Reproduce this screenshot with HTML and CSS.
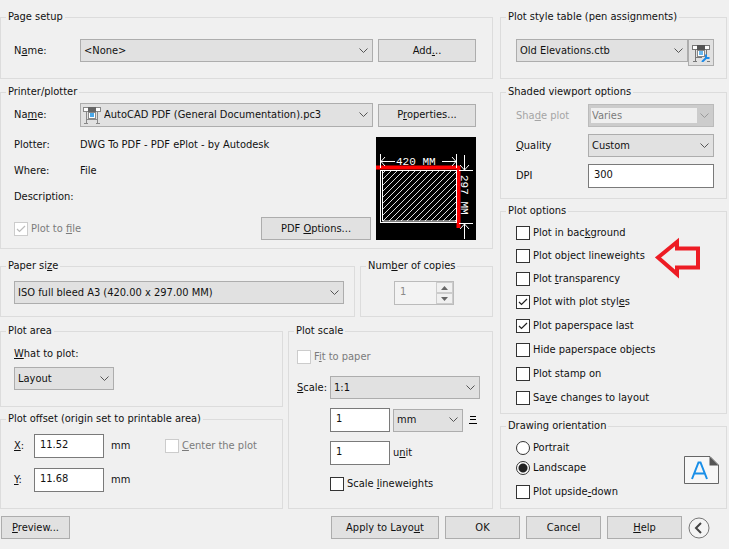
FILE: index.html
```html
<!DOCTYPE html>
<html lang="en">

<head>
    <meta charset="UTF-8" />
    <meta name="viewport" content="width=device-width, initial-scale=1.0" />
    <title>Plot</title>
    <link rel="stylesheet" href="styles.css">
</head>

<body>
    <form class="dialog">
        <div class="column main-column">
            <fieldset class="page-setup">
                <legend>Page setup</legend>
                <div class="setup-row">
                    <label for="setupName">N<u>a</u>me:</label>
                    <select id="setupName">
                        <option>&lt;None&gt;</option>
                    </select>
                    <button type="button">Add<u>.</u>..</button>
                </div>
            </fieldset>

            <fieldset class="printer">
                <legend>Printer/plotter</legend>
                <div class="setup-row">
                    <label for="printerName">Na<u>m</u>e:</label>
                    <div class="icon-select">
                        <select id="printerName">
                            <option>AutoCAD PDF (General Documentation).pc3</option>
                        </select>
                        <svg class="plotter-icon" width="18" height="18" viewBox="0 0 18 18">
                            <path d="M3.500 6v11M14.500 6v11M1 17.500h4M13 17.500h4M4 13.500h10" fill="none" stroke="#888" />
                            <rect x="0.500" y="1.500" width="17" height="4" fill="#fff" stroke="#888" />
                            <rect x="5" y="1" width="8" height="5" fill="#666" />
                            <rect x="5.500" y="6.500" width="7" height="6" fill="#fff" stroke="#888" />
                            <rect x="7" y="7" width="4" height="4" fill="#4aa8ea" />
                        </svg>
                    </div>
                    <button type="button">P<u>r</u>operties...</button>
                </div>
                <div class="printer-body">
                    <div class="printer-info">
                        <dl>
                            <dt>Plotter:</dt>
                            <dd>DWG To PDF - PDF ePlot - by Autodesk</dd>
                            <dt>Where:</dt>
                            <dd>File</dd>
                            <dt>Description:</dt>
                            <dd></dd>
                        </dl>
                        <div class="file-row">
                            <label class="check disabled"><input type="checkbox" checked disabled /><span>Plot to <u>f</u>ile</span></label>
                            <button type="button">PDF <u>O</u>ptions...</button>
                        </div>
                    </div>
                    <svg class="preview" width="100" height="103" viewBox="0 0 100 103">
                        <defs>
                            <clipPath id="paper">
                                <rect x="7" y="34" width="73" height="50" />
                            </clipPath>
                        </defs>
                        <rect width="100" height="103" fill="#000" />
                        <path clip-path="url(#paper)" fill="none" stroke="#ddd" d="M3 40l10-10M3 46l16-16M3 52l22-22M3 58l28-28M3 64l34-34M3 70l40-40M3 76l46-46M3 82l52-52M3 88l58-58M9 88l58-58M15 88l58-58M21 88l58-58M27 88l58-58M33 88l58-58M39 88l58-58M45 88l58-58M51 88l58-58M57 88l58-58M63 88l58-58M69 88l58-58M75 88l58-58" />
                        <path d="M0 30.500h83.500M82.500 29v62" fill="none" stroke="#f00" stroke-width="4" />
                        <rect x="4.500" y="33.500" width="76" height="52" fill="none" stroke="#fff" />
                        <path d="M6.500 34v50h74" fill="none" stroke="#fff" />
                        <g fill="none" stroke="#fff">
                            <path d="M4.500 17v14M80.500 17v14M5 24.500h14M66 24.500h14M9 20l-4 4.500l4 4.500M76 20l4 4.500l-4 4.500" />
                            <path d="M83 33.500h14M83 86.500h14M88.500 18v15M88.500 87v15M84 28l4.500 5l4.500-5M84 92l4.500-5l4.500 5" />
                        </g>
                        <text x="20" y="28" class="dimension">420 MM</text>
                        <text x="38" y="-85" transform="rotate(90)" class="dimension">297 MM</text>
                    </svg>
                </div>
            </fieldset>

            <div class="paper-row">
                <fieldset>
                    <legend>Paper si<u>z</u>e</legend>
                    <select class="paper-select" aria-label="Paper size">
                        <option>ISO full bleed A3 (420.00 x 297.00 MM)</option>
                    </select>
                </fieldset>
                <fieldset>
                    <legend>Num<u>b</u>er of copies</legend>
                    <div class="spinner">
                        <input type="text" value="1" aria-label="Number of copies" disabled />
                        <button type="button" aria-label="More copies" disabled><svg width="7" height="4" viewBox="0 0 7 4"><path d="M0 4L3.500 0L7 4z" /></svg></button>
                        <button type="button" aria-label="Fewer copies" disabled><svg width="7" height="4" viewBox="0 0 7 4"><path d="M0 0L3.500 4L7 0z" /></svg></button>
                    </div>
                </fieldset>
            </div>

            <div class="plot-row">
                <div class="column">
                    <fieldset class="plot-area">
                        <legend>Plot area</legend>
                        <label for="whatToPlot"><u>W</u>hat to plot:</label>
                        <select id="whatToPlot">
                            <option>Layout</option>
                        </select>
                    </fieldset>
                    <fieldset class="plot-offset">
                        <legend>Plot offset (origin set to printable area)</legend>
                        <div class="offset-grid">
                            <label for="offsetX"><u>X</u>:</label>
                            <input type="text" id="offsetX" value="11.52" />
                            <span>mm</span>
                            <label class="check disabled"><input type="checkbox" disabled /><span><u>C</u>enter the plot</span></label>
                            <label for="offsetY"><u>Y</u>:</label>
                            <input type="text" id="offsetY" value="11.68" />
                            <span>mm</span>
                        </div>
                    </fieldset>
                </div>
                <fieldset class="plot-scale">
                    <legend>Plot scale</legend>
                    <label class="check disabled"><input type="checkbox" disabled /><span>F<u>i</u>t to paper</span></label>
                    <div class="scale-grid">
                        <label for="scale"><u>S</u>cale:</label>
                        <select id="scale" class="scale-select">
                            <option>1:1</option>
                        </select>
                        <input type="text" class="paper-units" value="1" aria-label="Paper units" />
                        <select aria-label="Unit">
                            <option>mm</option>
                        </select>
                        <svg class="equals" width="8" height="8" viewBox="0 0 8 8">
                            <path d="M1 0.500h6M1 3.500h6M0 7.500h8" fill="none" stroke="#000" />
                        </svg>
                        <input type="text" class="paper-units" id="drawingUnits" value="1" />
                        <label for="drawingUnits">u<u>n</u>it</label>
                        <label class="check scale-lineweights"><input type="checkbox" /><span>Scale <u>l</u>ineweights</span></label>
                    </div>
                </fieldset>
            </div>
        </div>

        <div class="column side-column">
            <fieldset class="style-table">
                <legend>Plot style table (pen assi<u>g</u>nments)</legend>
                <div class="style-row">
                    <select aria-label="Plot style table">
                        <option>Old Elevations.ctb</option>
                    </select>
                    <button type="button" class="edit-style" aria-label="Edit plot style">
                        <svg width="18" height="18" viewBox="0 0 18 18">
                            <path d="M3.500 6v11M14.500 6v6M1 17.500h4M15 17.500h3M4 13.500h6" fill="none" stroke="#777" />
                            <rect x="0.500" y="1.500" width="17" height="4" fill="#fff" stroke="#777" />
                            <rect x="5" y="1" width="8" height="5" fill="#555" />
                            <rect x="5.500" y="6.500" width="7" height="6" fill="#fff" stroke="#888" />
                            <rect x="7" y="7" width="4" height="4" fill="#6bb8ee" />
                            <path d="M10 18L15 13M14 10.500v3.500h3.500" fill="none" stroke="#1d8be8" stroke-width="2" />
                        </svg>
                    </button>
                </div>
            </fieldset>

            <fieldset class="shaded">
                <legend>Shaded viewport options</legend>
                <div class="shaded-grid">
                    <label for="shadePlot" class="muted">Sha<u>d</u>e plot</label>
                    <select id="shadePlot" disabled>
                        <option>Varies</option>
                    </select>
                    <label for="quality"><u>Q</u>uality</label>
                    <select id="quality">
                        <option>Custom</option>
                    </select>
                    <label for="dpi">DPI</label>
                    <input type="text" id="dpi" value="300" />
                </div>
            </fieldset>

            <fieldset class="plot-options">
                <legend>Plot options</legend>
                <label class="check"><input type="checkbox" /><span>Plot in bac<u>k</u>ground</span></label>
                <label class="check"><input type="checkbox" /><span>Plot object lineweights</span></label>
                <label class="check"><input type="checkbox" /><span>Plot <u>t</u>ransparency</span></label>
                <label class="check"><input type="checkbox" checked /><span>Plot with plot styl<u>e</u>s</span></label>
                <label class="check"><input type="checkbox" checked /><span>Plot paperspace last</span></label>
                <label class="check"><input type="checkbox" /><span>Hide paperspace ob<u>j</u>ects</span></label>
                <label class="check"><input type="checkbox" /><span>Plot stamp on</span></label>
                <label class="check"><input type="checkbox" /><span>Sa<u>v</u>e changes to layout</span></label>
                <svg class="callout" width="46" height="42" viewBox="0 0 46 42">
                    <path d="M3 20.500L22 5V11.500H43V30.500H22V37z" fill="none" stroke="#ed1c24" stroke-width="4" />
                </svg>
            </fieldset>

            <fieldset class="orientation">
                <legend>Drawing orientation</legend>
                <div class="orientation-row">
                    <div>
                        <label class="check"><input type="radio" name="orientation" /><span>Portrait</span></label>
                        <label class="check"><input type="radio" name="orientation" checked /><span>Landscape</span></label>
                        <label class="check upside"><input type="checkbox" /><span>Plot upside<u>-</u>down</span></label>
                    </div>
                    <svg class="sheet" width="36" height="28" viewBox="0 0 36 28">
                        <path d="M0.500 0.500H26L34.500 9V27.500H0.500z" fill="#f7f7f7" stroke="#666" />
                        <path d="M25.500 0.500V9.500H34.500z" fill="#555" />
                        <path d="M8 23L14.500 6.500h2L23 23M10.500 17.500h10" fill="none" stroke="#1a8fe8" stroke-width="2" />
                    </svg>
                </div>
            </fieldset>
        </div>

        <div class="footer">
            <button type="button" class="preview-button"><u>P</u>review...</button>
            <button type="button" class="apply-button">Apply to Layo<u>u</u>t</button>
            <button type="submit">OK</button>
            <button type="button">Cancel</button>
            <button type="button"><u>H</u>elp</button>
            <button type="button" class="collapse" aria-label="Less options">
                <svg width="22" height="22" viewBox="0 0 22 22">
                    <circle cx="11" cy="11" r="10" fill="#f4f4f4" stroke="#777" />
                    <path d="M13 6L8 11L13 16" fill="none" stroke="#444" stroke-width="2" />
                </svg>
            </button>
        </div>
    </form>
</body>

</html>
```

FILE: styles.css
```css
* {
    box-sizing: border-box;
}

body {
    margin: 0;
    background-color: #f0f0f0;
    color: #111;
    font-family: "DejaVu Sans Condensed", Tahoma, sans-serif;
    font-size: 11px;
    line-height: 14px;
}

.dialog {
    display: grid;
    grid-template-columns: 493fr 227fr;
    column-gap: 7px;
    padding: 10px 2px 8px 0;
}

.column {
    display: flex;
    flex-direction: column;
    gap: 5px;
    min-width: 0;
}

fieldset {
    margin: 0;
    min-width: 0;
    border: 1px solid #dcdcdc;
    padding: 0 16px 0 13px;
}

legend {
    margin-left: -8px;
    padding: 0 2px;
}

u {
    text-underline-offset: 1px;
}

button,
select,
input {
    font: inherit;
    color: inherit;
    margin: 0;
}

button {
    height: 23px;
    padding: 0;
    border: 1px solid #adadad;
    background-color: #e1e1e1;
}

select {
    appearance: none;
    width: 100%;
    height: 23px;
    padding: 0 20px 0 3px;
    border: 1px solid #adadad;
    border-radius: 0;
    background: #e1e1e1 url("data:image/svg+xml,%3Csvg xmlns='http://www.w3.org/2000/svg' width='9' height='6'%3E%3Cpath d='M0.5 0.5L4.5 4.5L8.5 0.5' fill='none' stroke='%23555'/%3E%3C/svg%3E") no-repeat right 4px center;
}

input[type="text"] {
    width: 100%;
    height: 24px;
    padding: 0 5px 4px;
    border: 1px solid #7a7a7a;
    background-color: #fff;
}

.check {
    display: flex;
    align-items: center;
    gap: 3px;
}

.check input {
    appearance: none;
    flex: none;
    width: 14px;
    height: 14px;
    border: 1px solid #333;
    background: #fff no-repeat center;
}

.check input[type="checkbox"]:checked {
    background-image: url("data:image/svg+xml,%3Csvg xmlns='http://www.w3.org/2000/svg' width='10' height='8'%3E%3Cpath d='M1 4L3.5 6.5L9 1' fill='none' stroke='%23222' stroke-width='1.2'/%3E%3C/svg%3E");
}

.check input[type="radio"] {
    border-radius: 50%;
}

.check input[type="radio"]:checked {
    background-image: radial-gradient(circle, #222 4px, #fff 5px);
}

.disabled {
    color: #7b7b7b;
}

.check.disabled input {
    border-color: #ccc;
}

.check.disabled input:checked {
    background-image: url("data:image/svg+xml,%3Csvg xmlns='http://www.w3.org/2000/svg' width='10' height='8'%3E%3Cpath d='M1 4L3.5 6.5L9 1' fill='none' stroke='%23bbb' stroke-width='1.2'/%3E%3C/svg%3E");
}

.muted {
    color: #a5a5a5;
}

/* Page setup and printer */

.setup-row {
    display: grid;
    grid-template-columns: 61px 1fr 98px;
    gap: 5px;
    align-items: center;
}

.page-setup {
    padding-top: 15px;
    padding-bottom: 16px;
}

.main-column .printer {
    margin-top: 1px;
    padding-top: 4px;
    padding-bottom: 8px;
}

.icon-select {
    position: relative;
}

.icon-select select {
    display: block;
    height: 24px;
    padding-left: 23px;
}

.plotter-icon {
    position: absolute;
    left: 3px;
    top: 3px;
}

.printer-body {
    display: flex;
    align-items: flex-end;
    gap: 5px;
    padding-top: 5px;
}

.printer-info {
    flex: 1;
}

dl {
    display: grid;
    grid-template-columns: 66px 1fr;
    margin: 0 0 7px;
    line-height: 26px;
}

dd {
    margin: 0;
}

.file-row {
    display: flex;
    justify-content: space-between;
}

.file-row button {
    width: 110px;
}

.preview {
    display: block;
}

.dimension {
    font: 11px "Liberation Mono", monospace;
    fill: #fff;
}

/* Paper size and copies */

.paper-row {
    display: grid;
    grid-template-columns: 355fr 133fr;
    gap: 5px;
    margin-top: 5px;
}

.paper-row fieldset {
    padding: 8px 10px 11px 13px;
}

.paper-select {
    display: block;
}

.spinner {
    display: grid;
    grid-template-columns: 1fr 17px;
    grid-template-rows: 11px 11px;
    width: 60px;
    margin: 0 auto 0 20px;
    border: 1px solid #bbb;
}

.spinner input[type="text"] {
    grid-row: span 2;
    height: 22px;
    border: 0;
    background-color: #f3f3f3;
    color: #8a8a8a;
}

.spinner button {
    display: flex;
    align-items: center;
    justify-content: center;
    height: auto;
    border-color: #ccc;
    background-color: #f0f0f0;
}

.spinner path {
    fill: #666;
}

/* Plot area, offset and scale */

.plot-row {
    display: grid;
    grid-template-columns: 283fr 205fr;
    gap: 5px;
    margin-top: 2px;
}

.plot-area {
    padding-top: 9px;
    padding-bottom: 16px;
}

.plot-area select {
    display: block;
    width: 100px;
    margin-top: 6px;
}

.plot-offset {
    padding-top: 8px;
    padding-bottom: 16px;
}

.offset-grid {
    display: grid;
    grid-template-columns: 20px 70px 54px auto;
    gap: 10px 0;
    align-items: center;
}

.offset-grid > span {
    padding-left: 7px;
}

.offset-grid .check {
    margin-left: 7px;
}

.plot-scale {
    padding: 12px 12px 0 8px;
}

.plot-scale legend {
    margin-left: -3px;
}

.scale-grid {
    display: grid;
    grid-template-columns: 33px 60px 3px 70px 1fr;
    align-items: center;
    row-gap: 9px;
    padding-top: 12px;
}

.paper-units {
    grid-column: 2;
}

.scale-grid > select,
.scale-grid > .paper-units + label {
    grid-column-start: 4;
}

.scale-grid > .scale-select {
    grid-column: 2 / -1;
}

.equals {
    margin-left: 6px;
}

.scale-grid > .scale-lineweights {
    grid-column: 2 / -1;
    margin-top: 3px;
}

/* Right column */

.side-column fieldset {
    padding-left: 15px;
    padding-right: 12px;
}

.side-column legend {
    margin-left: -10px;
}

.side-column .style-table {
    padding-top: 15px;
    padding-bottom: 12px;
}

.style-row {
    display: flex;
}

.edit-style {
    flex: none;
    display: flex;
    align-items: center;
    justify-content: center;
    width: 26px;
    height: 27px;
}

.shaded {
    margin-top: 1px;
    padding-top: 5px;
    padding-bottom: 10px;
}

.side-column .shaded {
    margin-top: 1px;
}

.shaded-grid {
    display: grid;
    grid-template-columns: 72px 1fr;
    row-gap: 7px;
    align-items: center;
}

.shaded-grid select:disabled {
    border-color: #bbb;
    background-color: #ccc;
    background-image:
        url("data:image/svg+xml,%3Csvg xmlns='http://www.w3.org/2000/svg' width='9' height='6'%3E%3Cpath d='M0.5 0.5L4.5 4.5L8.5 0.5' fill='none' stroke='%23999'/%3E%3C/svg%3E"),
        linear-gradient(#efefef, #efefef);
    background-position: right 4px center, 2px 3px;
    background-size: 9px 6px, calc(100% - 18px) 15px;
    color: #7b7b7b;
    opacity: 1;
}

.plot-options {
    position: relative;
    padding-top: 3px;
    padding-bottom: 3px;
}

.plot-options .check {
    height: 24px;
}

.plot-options .check:nth-of-type(-n+3) {
    height: 23px;
}

/* Arrow laid over the options list */
.callout {
    position: absolute;
    right: 25px;
    top: 19px;
}

.orientation {
    padding-top: 5px;
    padding-bottom: 6px;
}

.side-column .orientation {
    padding-right: 6px;
}

.orientation-row {
    display: flex;
    justify-content: space-between;
    align-items: center;
}

.orientation .check {
    height: 20px;
}

.orientation .upside {
    margin-top: 4px;
}

/* Dialog buttons */

.footer {
    grid-column: 1 / -1;
    display: flex;
    align-items: center;
    gap: 6px;
    padding: 7px 17px 0 1px;
}

.footer button {
    width: 75px;
}

.footer .preview-button {
    width: 69px;
    margin-right: auto;
}

.footer .apply-button {
    width: 108px;
}

.footer .collapse {
    width: 22px;
    height: 22px;
    border: 0;
    background: none;
}

.collapse svg {
    display: block;
}
```
